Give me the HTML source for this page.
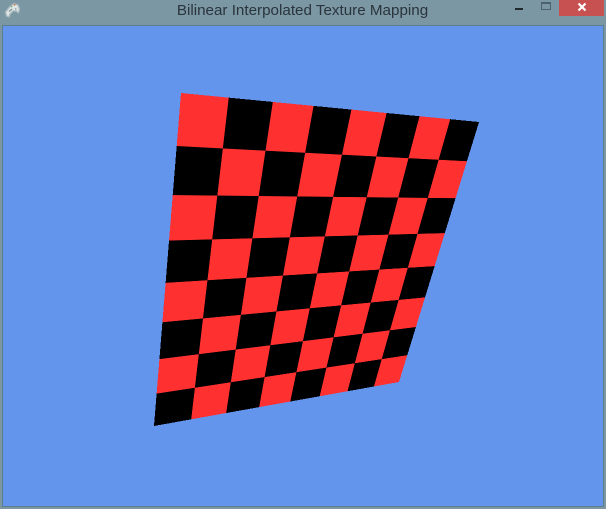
<!DOCTYPE html>
<html>
<head>
<meta charset="utf-8">
<title>Bilinear Interpolated Texture Mapping</title>
<style>
html,body{margin:0;padding:0;width:606px;height:509px;overflow:hidden;background:#7b97a3;}
#title{position:absolute;left:0;top:1px;width:605px;text-align:center;font:15.2px/20px "Liberation Sans",sans-serif;color:#2a343c;white-space:nowrap;}
#client{position:absolute;left:2px;top:25px;width:600px;height:480px;border:1px solid #5f7d8a;background:#6495ed;overflow:hidden;}
#board{position:absolute;left:0;top:0;width:800px;height:800px;transform-origin:0 0;
background:repeating-conic-gradient(#000 0 25%,#ff3030 0 50%) 0 0/200px 200px;
transform:matrix3d(.573645,.087481,0,.000419928, .029009,.589856,0,.000407528, 0,0,1,0, 181,93,0,1);}
#close{position:absolute;left:559px;top:0;width:45px;height:16px;background:#c75050;}
#min{position:absolute;left:515px;top:8px;width:8px;height:2px;background:#20282c;}
#max{position:absolute;left:541px;top:2px;width:8px;height:5px;border:1px solid #4d626d;border-top-width:2px;}
svg{position:absolute;}
</style>
</head>
<body>
<div id="client"></div>
<div id="board"></div>
<svg style="left:4px;top:2px" width="18" height="16" viewBox="0 0 18 16">
<path d="M1.5 10 L6 4.5 L10 1.5 L14 3 L15.5 7 L14.5 11 L12 9 L9 9 L6 12 L5 15 L2.5 14 Z" fill="#dfe6e6" stroke="#a9b9bd" stroke-width="1.4" stroke-linejoin="round"/>
<path d="M5 9.5 L8 7" stroke="#7d8e94" stroke-width="1.3"/>
<path d="M11 6.5 L12.5 7.5" stroke="#8a9ba0" stroke-width="1.2"/>
<circle cx="10.5" cy="2.8" r="1" fill="#c9825a"/>
<circle cx="7.5" cy="4.5" r=".9" fill="#7fa77f"/>
</svg>
<div id="title">Bilinear Interpolated Texture Mapping</div>
<div id="min"></div>
<div id="max"></div>
<div id="close"></div>
<svg style="left:577px;top:2px" width="10" height="10" viewBox="0 0 10 10">
<path d="M1.5 1.5 L8.5 8.5 M8.5 1.5 L1.5 8.5" stroke="#fff" stroke-width="2.2" fill="none"/>
</svg>
</body>
</html>
